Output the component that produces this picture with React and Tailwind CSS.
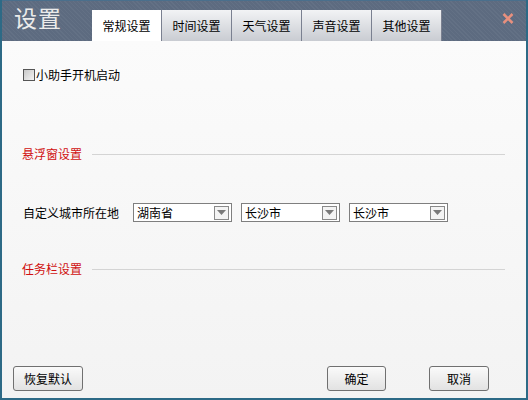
import React from 'react';

const FONT = { fontFamily: '"SimSun", "Noto Sans CJK SC", sans-serif' };

const tabs = ['常规设置', '时间设置', '天气设置', '声音设置', '其他设置'];

const Select = ({ value }) => (
  <div className="w-[99px] h-[19px] border border-[#7f7f7f] bg-white flex items-center justify-between pl-[3px] pr-[2px]">
    <span className="text-[12px] text-black leading-none">{value}</span>
    <div className="w-[15px] h-[14px] border border-[#8a8a8a] bg-[#f4f4f4] flex items-center justify-center">
      <svg width="9" height="5" viewBox="0 0 9 5"><path d="M0 0h9L4.5 5z" fill="#7a7a7a" /></svg>
    </div>
  </div>
);

const Section = ({ title }) => (
  <div className="flex items-center gap-[10px] pr-[21px]">
    <span className="text-[12px] text-[#d01010] leading-none">{title}</span>
    <div className="flex-1 h-px bg-[#d4d4d4]" />
  </div>
);

const Btn = ({ children, w }) => (
  <button className={`${w} h-[25px] border border-[#707070] rounded-[3px] bg-gradient-to-b from-[#fafafa] to-[#e2e2e2] text-[12px] text-black`}>
    {children}
  </button>
);

export default function App() {
  return (
    <div className="w-[528px] h-[400px] flex flex-col border-l-2 border-r-2 border-b-2 border-[#2d6a86] bg-[#f6f6f6]" style={FONT}>
      {/* Header */}
      <div className="h-[41px] flex items-end relative bg-[#5d6b80] border-t border-[#4a6f8c]"
        style={{ backgroundImage: 'repeating-linear-gradient(45deg, rgba(255,255,255,0.04) 0 1px, transparent 1px 3px)' }}>
        <span className="absolute left-[12px] top-[5px] text-[23px] text-[#ebebeb] leading-none tracking-[1px]">设置</span>
        <div className="flex ml-[90px] h-[31px]">
          {tabs.map((t, i) => (
            <div key={t}
              className={`w-[70px] flex items-center justify-center text-[12px] text-black border-r border-[#7a8090] ${i === 0 ? 'bg-white' : 'bg-gradient-to-b from-[#f2f3f5] to-[#c9ccd2]'}`}>
              {t}
            </div>
          ))}
        </div>
        <svg className="absolute right-[12px] top-[12px]" width="12" height="11" viewBox="0 0 12 11">
          <path d="M1.5 1l9 9M10.5 1l-9 9" stroke="#e8907e" strokeWidth="2.5" />
        </svg>
      </div>

      {/* Body */}
      <div className="flex-1 flex flex-col bg-gradient-to-b from-[#fbfbfb] to-[#f3f3f3] pl-[20px]">
        <div className="flex items-center mt-[28px] ml-[1px]">
          <div className="w-[12px] h-[12px] border border-[#555] bg-gradient-to-br from-[#c8c8c8] to-[#f4f4f4]" />
          <span className="text-[12px] text-black ml-[1px] leading-none">小助手开机启动</span>
        </div>

        <div className="mt-[67px]">
          <Section title="悬浮窗设置" />
        </div>

        <div className="flex items-center mt-[43px] ml-[1px]">
          <span className="text-[12px] text-black w-[110px] leading-none">自定义城市所在地</span>
          <div className="flex gap-[9px]">
            <Select value="湖南省" />
            <Select value="长沙市" />
            <Select value="长沙市" />
          </div>
        </div>

        <div className="mt-[41px]">
          <Section title="任务栏设置" />
        </div>

        <div className="flex-1" />

        <div className="flex items-center mb-[7px] -ml-[9px]">
          <Btn w="w-[70px]">恢复默认</Btn>
          <div className="w-[244px]" />
          <Btn w="w-[59px]">确定</Btn>
          <div className="w-[43px]" />
          <Btn w="w-[60px]">取消</Btn>
        </div>
      </div>
    </div>
  );
}
